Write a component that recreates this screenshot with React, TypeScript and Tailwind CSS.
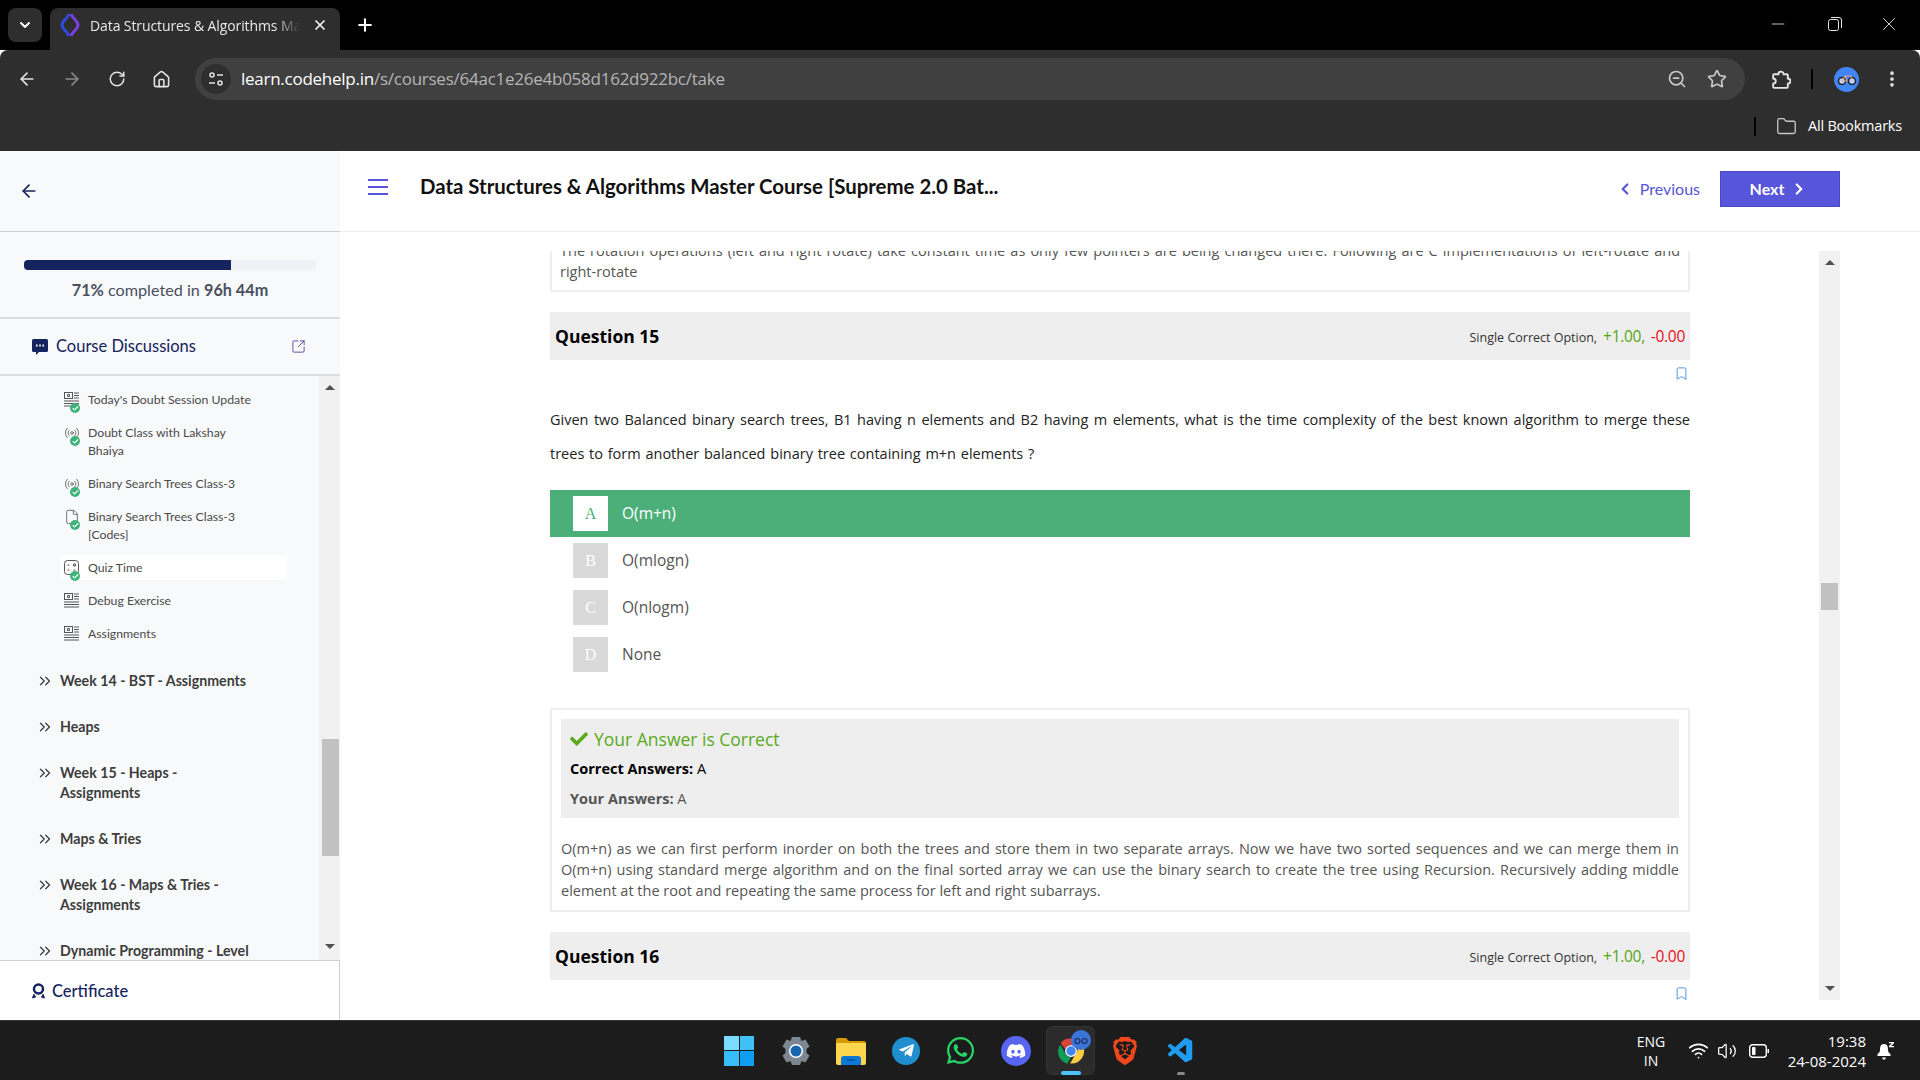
import {
  ArrowLeft,
  ArrowRight,
  Bookmark,
  Check,
  ChevronDown,
  ChevronLeft,
  ChevronRight,
  ChevronsRight,
  EllipsisVertical,
  File,
  Folder,
  House,
  Minus,
  Plus,
  Radio,
  RotateCw,
  SquareArrowOutUpRight,
  Star,
  Volume2,
  Wifi,
  X,
  ZoomOut,
} from 'lucide-react'
import { FaCheck, FaDiscord, FaTelegramPlane, FaWhatsapp } from 'react-icons/fa'
import { SiBrave } from 'react-icons/si'
import { VscVscode } from 'react-icons/vsc'

const site = "font-['Lato',sans-serif]"
const body = "font-['Open_Sans',sans-serif]"

const ArticleIcon = () => (
  <svg width="15" height="15" viewBox="0 0 15 15" fill="none" stroke="#555" strokeWidth="1">
    <rect x="0.5" y="0.5" width="8" height="6" />
    <path d="M3.5 2.5h2v2h-2zM10 1h5M10 3.5h5M10 6h5M0 9h15M0 11.5h15M0 14h15" />
  </svg>
)

const QuizIcon = () => (
  <svg width="15" height="15" viewBox="0 0 15 15" fill="none" stroke="#555" strokeWidth="1">
    <rect x="0.5" y="0.5" width="14" height="14" rx="3" />
    <path d="M3.5 5h2M9.5 4h2v2h-2zM3.5 10h2M9.5 10h2" />
  </svg>
)

const lessons = [
  { title: ["Today's Doubt Session Update"], icon: 'article', done: true },
  { title: ['Doubt Class with Lakshay', 'Bhaiya'], icon: 'radio', done: true },
  { title: ['Binary Search Trees Class-3'], icon: 'radio', done: true },
  { title: ['Binary Search Trees Class-3', '[Codes]'], icon: 'file', done: true },
  { title: ['Quiz Time'], icon: 'quiz', done: true, active: true },
  { title: ['Debug Exercise'], icon: 'article', done: false },
  { title: ['Assignments'], icon: 'article', done: false },
]

const sections = [
  ['Week 14 - BST - Assignments'],
  ['Heaps'],
  ['Week 15 - Heaps -', 'Assignments'],
  ['Maps & Tries'],
  ['Week 16 - Maps & Tries -', 'Assignments'],
  ['Dynamic Programming - Level'],
]

const options = [
  { key: 'A', text: 'O(m+n)', correct: true },
  { key: 'B', text: 'O(mlogn)' },
  { key: 'C', text: 'O(nlogm)' },
  { key: 'D', text: 'None' },
]

const BrowserChrome = () => (
  <div className="shrink-0 text-white">
    <div className="flex h-[50px] bg-black">
      <div className="ml-2 mt-2 flex h-[34px] w-[34px] items-center justify-center rounded-lg bg-[#2e2e2e]">
        <ChevronDown size={16} strokeWidth={3} />
      </div>
      <div className="ml-2 mt-2 flex h-[42px] w-[290px] items-center rounded-t-lg bg-[#2e2e2e] pb-[8px] pl-[10px] pr-3">
        <svg width="20" height="24" viewBox="0 0 20 24" fill="none">
          <path d="M9 1C7 6 2 8 2 12s5 6 7 11" stroke="#2f4bd8" strokeWidth="3" />
          <path d="M11 1c2 5 7 7 7 11s-5 6-7 11" stroke="#7b3fe4" strokeWidth="3" />
        </svg>
        <div className="ml-[10px] w-[210px] overflow-hidden whitespace-nowrap font-['Open_Sans',sans-serif] text-[14px] tracking-[-0.1px] text-[#e8e8e8] [mask-image:linear-gradient(to_right,black_88%,transparent)]">
          Data Structures &amp; Algorithms Master
        </div>
        <X size={16} strokeWidth={2.5} className="ml-3" />
      </div>
      <Plus size={20} strokeWidth={2.5} className="ml-[15px] mt-[15px]" />
      <div className="ml-auto flex items-center pb-[2px] pr-[20px] text-[#e5e5e5]">
        <Minus size={20} strokeWidth={1} />
        <svg width="14" height="14" viewBox="0 0 14 14" fill="none" stroke="currentColor" className="ml-[40px]">
          <rect x="0.5" y="2.5" width="10" height="11" rx="2" />
          <path d="M3 .5h8a2.5 2.5 0 0 1 2.500 2.500v8" />
        </svg>
        <X size={22} strokeWidth={1} className="ml-[36px]" />
      </div>
    </div>
    <div className="h-[101px] rounded-t-lg bg-[#2e2e2e]">
      <div className="flex h-[58px] items-center pl-[17px] pr-[18px]">
        <ArrowLeft size={20} strokeWidth={2} className="text-[#e3e3e3]" />
        <ArrowRight size={20} strokeWidth={2} className="ml-[25px] text-[#8a8a8a]" />
        <RotateCw size={18} strokeWidth={2} className="ml-[26px] text-[#e3e3e3]" />
        <House size={19} strokeWidth={2} className="ml-[26px] text-[#e3e3e3]" />
        <div className="ml-[24px] flex h-[42px] w-[1552px] items-center rounded-full bg-[#404040] pl-[6px] pr-[18px]">
          <div className="flex h-[30px] w-[30px] items-center justify-center rounded-full bg-[#2e2e2e]">
            <svg width="16" height="16" viewBox="0 0 16 16" fill="none" stroke="#e3e3e3" strokeWidth="1.500">
              <circle cx="4" cy="4" r="2" />
              <circle cx="12" cy="12" r="2" />
              <path d="M9 4h6M1 12h6" />
            </svg>
          </div>
          <div className="ml-[10px] whitespace-nowrap font-['Open_Sans',sans-serif] text-[17px] tracking-[-0.25px] text-[#b5b5b5]">
            <span className="text-white">learn.codehelp.in</span>/s/courses/64ac1e26e4b058d162d922bc/take
          </div>
          <ZoomOut size={20} strokeWidth={2} className="ml-auto text-[#c8c8c8]" />
          <Star size={20} strokeWidth={2} className="ml-[20px] text-[#c8c8c8]" />
        </div>
        <svg width="21" height="21" viewBox="0 0 20 20" fill="none" stroke="#e3e3e3" strokeWidth="1.800" className="ml-[25px]">
          <path d="M4 5h4a2.500 2.500 0 0 1 5 0h3a1 1 0 0 1 1 1v3a2.500 2.500 0 0 1 0 5v3a1 1 0 0 1-1 1H4a1 1 0 0 1-1-1v-3a2.500 2.500 0 0 0 0-5V6a1 1 0 0 1 1-1z" />
        </svg>
        <div className="ml-[20px] h-[20px] w-[2px] bg-black" />
        <div className="ml-[21px] flex h-[25px] w-[25px] items-center justify-center rounded-full bg-[#4285f4]">
          <svg width="20" height="12" viewBox="0 0 20 12" fill="none">
            <circle cx="5" cy="8" r="3.500" stroke="#222" strokeWidth="1.500" fill="#bcd4ff" />
            <circle cx="15" cy="8" r="3.500" stroke="#222" strokeWidth="1.500" fill="#bcd4ff" />
            <path d="M5 8 8 3h6l1 5M8 3l2 5h-5" stroke="#f4a58a" strokeWidth="1" />
          </svg>
        </div>
        <EllipsisVertical size={20} strokeWidth={2.5} className="ml-[23px] text-[#e3e3e3]" />
      </div>
      <div className="flex h-[36px] items-center justify-end pr-[18px]">
        <div className="h-[19px] w-[2px] bg-black" />
        <Folder size={21} strokeWidth={1.500} className="ml-[20px] text-[#c8c8c8]" />
        <span className="ml-[11px] font-['Open_Sans',sans-serif] text-[14.500px] tracking-[-0.2px] text-white">All Bookmarks</span>
      </div>
    </div>
  </div>
)

const LessonIcon = ({ icon, done }: { icon: string; done: boolean }) => (
  <div className="relative mt-[1.500px] h-[16.500px] w-[15px] shrink-0 text-[#555]">
    {icon === 'article' && <ArticleIcon />}
    {icon === 'quiz' && <QuizIcon />}
    {icon === 'radio' && <Radio size={16} strokeWidth={1.200} />}
    {icon === 'file' && <File size={16} strokeWidth={1.200} />}
    {done && (
      <span className="absolute left-[6px] top-[11px] flex h-[10px] w-[10px] items-center justify-center rounded-full bg-[#3fb37a] text-white">
        <Check size={7} strokeWidth={4} />
      </span>
    )}
  </div>
)

const Sidebar = () => (
  <aside className={`flex w-[340px] shrink-0 flex-col bg-[#f8f9fb] ${site}`}>
    <div className="flex h-[81px] shrink-0 items-center border-b border-[#cfcfcf] pl-[19px]">
      <ArrowLeft size={20} strokeWidth={2} className="text-[#15235e]" />
    </div>
    <div className="h-[87px] shrink-0 border-b-2 border-[#dcdcdc] px-6 pt-7">
      <div className="h-[10px] overflow-hidden rounded-sm bg-[#f0f1f4]">
        <div className="h-full w-[71%] bg-[#14245f]" />
      </div>
      <div className="mt-[9px] text-center text-[16.200px] leading-[22px] text-[#4a5060]">
        <b>71%</b> completed in <b>96h 44m</b>
      </div>
    </div>
    <div className="flex h-[57px] shrink-0 items-center border-b-2 border-[#dcdcdc] pl-8 pr-[34px] text-[#15235e]">
      <svg width="16" height="16" viewBox="0 0 16 16">
        <path fill="#15235e" d="M1.500 0h13A1.500 1.500 0 0 1 16 1.500v10a1.500 1.500 0 0 1-1.500 1.500H7l-3 3v-3H1.500A1.500 1.500 0 0 1 0 11.500v-10A1.500 1.500 0 0 1 1.500 0z" />
        <path stroke="#fff" strokeWidth="1.800" d="M4 6.500h1.600M7.200 6.500h1.600M10.400 6.500H12" />
      </svg>
      <span className="ml-2 text-[16.500px]">Course Discussions</span>
      <SquareArrowOutUpRight size={15} strokeWidth={1.300} className="ml-auto text-[#4c2a8c]" />
    </div>
    <div className="relative flex h-[584px] shrink-0 overflow-hidden">
      <div className="w-[319px] shrink-0 pt-[11px]">
        <div className="flex flex-col gap-2 pl-[60px] pr-[32px]">
          {lessons.map((l) => (
            <div
              key={l.title.join(' ')}
              className={`flex px-[4px] py-[3.500px] text-[12.250px] leading-[18px] text-[#4a4a4a] ${l.active ? 'bg-white' : ''}`}
            >
              <LessonIcon icon={l.icon} done={l.done} />
              <div className="ml-[9px]">
                {l.title.map((t) => (
                  <div key={t}>{t}</div>
                ))}
              </div>
            </div>
          ))}
        </div>
        <div className="mt-[12px] pl-[36px]">
          {sections.map((s) => (
            <div key={s[0]} className="flex py-[13px] text-[14.200px] font-bold leading-[20px] text-[#3d3d3d]">
              <ChevronsRight size={18} strokeWidth={1.700} className="mt-[1px] shrink-0" />
              <div className="ml-[6px]">
                {s.map((t) => (
                  <div key={t} className="whitespace-nowrap">{t}</div>
                ))}
              </div>
            </div>
          ))}
        </div>
      </div>
      <div className="flex h-[584px] w-[21px] flex-col items-center bg-[#f1f1f1] pt-[9px]">
        <div className="h-0 w-0 border-x-[5px] border-b-[5px] border-x-transparent border-b-[#505050]" />
        <div className="ml-[1px] mt-[349px] h-[117px] w-[17px] bg-[#c1c1c1]" />
        <div className="mt-[88px] h-0 w-0 border-x-[5px] border-t-[5px] border-x-transparent border-t-[#505050]" />
      </div>
    </div>
    <div className="flex h-[61px] shrink-0 items-center border-r border-t border-[#cfcfcf] bg-white pl-8 text-[#15235e]">
      <svg width="13" height="16" viewBox="0 0 13 16" fill="none">
        <circle cx="6.500" cy="6" r="4.500" stroke="#15235e" strokeWidth="2.500" />
        <path d="m2 11-1.500 4L4 13.800M11 11l1.500 4L9 13.800" fill="#15235e" stroke="#15235e" />
      </svg>
      <span className="ml-[7px] text-[16.500px] font-medium">Certificate</span>
    </div>
  </aside>
)

const QuestionBar = ({ n }: { n: number }) => (
  <>
    <div className="mt-5 flex h-[48px] items-center justify-between bg-[#eeeeee] pl-[5px] pr-[5px]">
      <span className={`text-[17.500px] font-bold text-black ${body}`}>Question {n}</span>
      <span className={`flex items-baseline pt-[1px] text-[12.500px] text-[#333] ${body}`}>
        Single Correct Option,
        <span className="ml-[6px] text-[15.500px] tracking-[-0.3px] text-[#55a514]">+1.00,</span>
        <span className="ml-[6px] text-[15.500px] tracking-[-0.3px] text-[#e8101a]">-0.00</span>
      </span>
    </div>
    <div className="flex h-[43px] justify-end pr-[1px] pt-[6px]">
      <Bookmark size={15} strokeWidth={1.500} className="text-[#4a90e2]" />
    </div>
  </>
)

const Quiz = () => (
  <div className={`w-[1140px] shrink-0 overflow-hidden ${body}`}>
    <div className="-mt-[11px] border-x-2 border-b-2 border-[#eeeeee] px-[8px] pb-[8px] text-[14.500px] leading-[21px] text-[#555]">
      <div className="text-justify [text-align-last:justify]">
        The rotation operations (left and right rotate) take constant time as only few pointers are being changed there. Following are C implementations of left-rotate and
      </div>
      <div>right-rotate</div>
    </div>
    <QuestionBar n={15} />
    <div className="text-[14.500px] leading-[33.500px] text-[#222] [word-spacing:1px]">
      <div className="text-justify [text-align-last:justify]">
        Given two Balanced binary search trees, B1 having n elements and B2 having m elements, what is the time complexity of the best known algorithm to merge these
      </div>
      <div>trees to form another balanced binary tree containing m+n elements ?</div>
    </div>
    <div className="mt-5">
      {options.map((o) => (
        <div key={o.key} className={`flex h-[47px] items-center pl-[23px] ${o.correct ? 'bg-[#4caf79]' : ''}`}>
          <div
            className={`flex h-[35px] w-[35px] items-center justify-center font-['Liberation_Serif',serif] text-[16px] ${
              o.correct ? 'bg-white text-[#4caf79]' : 'bg-[#d9d9d9] text-white'
            }`}
          >
            {o.key}
          </div>
          <span className={`ml-[14px] text-[15.500px] ${o.correct ? 'text-white' : 'text-[#555]'}`}>{o.text}</span>
        </div>
      ))}
    </div>
    <div className="mt-[30px] h-[204px] border-2 border-[#eeeeee] px-[9px] pt-[9px]">
      <div className="h-[99px] bg-[#eeeeee] px-[9px] pt-[8px] text-[14.500px]">
        <div className="flex items-center text-[17.500px] leading-[24px] text-[#5aaa1c]">
          <FaCheck size={18} />
          <span className="ml-[6px]">Your Answer is Correct</span>
        </div>
        <div className="mt-[7px] leading-[22px] text-black">
          <b>Correct Answers:</b> A
        </div>
        <div className="mt-2 leading-[22px] text-[#555]">
          <b>Your Answers:</b> A
        </div>
      </div>
      <div className="mt-[20px] text-[14.500px] leading-[21px] text-[#555]">
        <div className="text-justify [text-align-last:justify]">
          O(m+n) as we can first perform inorder on both the trees and store them in two separate arrays. Now we have two sorted sequences and we can merge them in
        </div>
        <div className="text-justify [text-align-last:justify]">
          O(m+n) using standard merge algorithm and on the final sorted array we can use the binary search to create the tree using Recursion. Recursively adding middle
        </div>
        <div>element at the root and repeating the same process for left and right subarrays.</div>
      </div>
    </div>
    <QuestionBar n={16} />
  </div>
)

const Main = () => (
  <main className="flex min-w-0 flex-1 flex-col bg-white">
    <header className={`flex h-[81px] shrink-0 items-center border-b border-[#eeeeee] pb-[4px] pl-[27px] pr-[80px] ${site}`}>
      <svg width="22" height="18" viewBox="0 0 22 18" stroke="#5755d9" strokeWidth="2" className="mb-[4px]">
        <path d="M1 2h20M1 9h20M1 16h20" />
      </svg>
      <h1 className="mb-[5px] ml-[31px] text-[20.400px] font-bold text-[#111]">
        Data Structures &amp; Algorithms Master Course [Supreme 2.0 Bat...
      </h1>
      <div className="ml-auto flex items-center text-[16px] text-[#5755d9]">
        <ChevronLeft size={18} strokeWidth={3} />
        <span className="ml-[6px]">Previous</span>
      </div>
      <div className="ml-[20px] flex h-[36px] w-[120px] items-center justify-center border border-[#4a48c9] bg-[#5755d9] pr-[2px] text-[16px] font-bold text-white">
        Next
        <ChevronRight size={18} strokeWidth={3} className="ml-[6px]" />
      </div>
    </header>
    <div className="flex min-h-0 flex-1 pl-[210px] pr-[80px] pt-[19px]">
      <Quiz />
      <div className="ml-[129px] flex h-[749px] w-[21px] shrink-0 flex-col items-center bg-[#f1f1f1] pt-[9px]">
        <div className="h-0 w-0 border-x-[5px] border-b-[5px] border-x-transparent border-b-[#505050]" />
        <div className="mt-[318px] h-[27px] w-[17px] bg-[#c1c1c1]" />
        <div className="mt-[376px] h-0 w-0 border-x-[5px] border-t-[5px] border-x-transparent border-t-[#505050]" />
      </div>
    </div>
  </main>
)

const Taskbar = () => (
  <footer className="flex h-[60px] shrink-0 items-center border-t border-[#333] bg-[#1c1c1c] text-white">
    <div className="ml-[724px] flex items-center">
      <div className="grid h-[30px] w-[30px] grid-cols-2 gap-[1px]">
        <span className="bg-[#7adcff]" />
        <span className="bg-[#3fc1f7]" />
        <span className="bg-[#38bdf8]" />
        <span className="bg-[#119ef2]" />
      </div>
      <div className="ml-[27px] flex h-[30px] w-[30px] items-center justify-center">
        <svg width="30" height="30" viewBox="0 0 30 30">
          <path fill="#7d8791" d="m11 1h8l1.500 4 4-1.500 4 7-3 2.500v4l3 2.500-4 7-4-1.500L19 29h-8l-1.500-4-4 1.500-4-7 3-2.500v-4l-3-2.500 4-7 4 1.500z" />
          <circle cx="15" cy="15" r="7" fill="#fff" />
          <circle cx="15" cy="15" r="5.500" fill="#1565b0" />
        </svg>
      </div>
      <svg width="30" height="28" viewBox="0 0 30 28" className="ml-[25px]">
        <path fill="#d49a08" d="M0 3a2 2 0 0 1 2-2h8l3 3h15a2 2 0 0 1 2 2v4H0z" />
        <path fill="#ffd64d" d="M0 6h30v20a2 2 0 0 1-2 2H2a2 2 0 0 1-2-2z" />
        <path fill="#0f78d4" d="M5 22a3 3 0 0 1 3-3h14a3 3 0 0 1 3 3v6H5z" />
        <path stroke="#053f7a" strokeWidth="1" d="M11 23h8" />
      </svg>
      <div className="ml-[26px] flex h-[28px] w-[28px] items-center justify-center rounded-full bg-[#1f8fd0] text-white">
        <FaTelegramPlane size={17} />
      </div>
      <FaWhatsapp size={31} className="ml-[25px] text-[#25d366]" />
      <div className="ml-[25px] flex h-[30px] w-[30px] items-center justify-center rounded-full bg-[#5865f2] text-white">
        <FaDiscord size={20} />
      </div>
      <div className="relative ml-[15px] flex h-[49px] w-[49px] items-center justify-center rounded-md border border-[#333] bg-[#2b2b2b]">
        <svg width="30" height="30" viewBox="0 0 48 48">
          <path fill="#db4437" d="M24 4a20 20 0 0 1 17.300 10H24a10 10 0 0 0-9.500 6.800L7.500 11A20 20 0 0 1 24 4z" />
          <path fill="#0f9d58" d="M6.700 14 15 28.500a10 10 0 0 0 9 5.500l-6 10.300A20 20 0 0 1 6.700 14z" />
          <path fill="#ffcd40" d="M42 14a20 20 0 0 1-19.500 30l8.500-14.500a10 10 0 0 0 0-15.500z" />
          <circle cx="24" cy="24" r="8.500" fill="#4285f4" stroke="#fff" strokeWidth="2" />
        </svg>
        <span className="absolute right-[3px] top-[3px] flex h-[20px] w-[20px] items-center justify-center rounded-full bg-[#3b74d9]">
          <svg width="14" height="8" viewBox="0 0 14 8" fill="none" stroke="#1a2b50" strokeWidth="1.200">
            <circle cx="3.500" cy="5" r="2.500" />
            <circle cx="10.500" cy="5" r="2.500" />
          </svg>
        </span>
        <span className="absolute -bottom-[1px] left-[14px] h-[4px] w-[20px] rounded bg-[#4cc2ff]" />
      </div>
      <SiBrave size={28} className="ml-[16px] text-[#f1471d]" />
      <div className="relative ml-[27px]">
        <VscVscode size={30} className="text-[#1f9cf0]" />
        <span className="absolute -bottom-[9px] left-[11px] h-[3px] w-[8px] rounded bg-[#8a8a8a]" />
      </div>
    </div>
    <div className="ml-[435px] w-[40px] text-center font-['Open_Sans',sans-serif] text-[14px] leading-[19px]">
      ENG
      <br />
      IN
    </div>
    <Wifi size={21} strokeWidth={2} className="ml-[17px]" />
    <Volume2 size={20} strokeWidth={1.500} className="ml-[8px]" />
    <svg width="20" height="14" viewBox="0 0 20 14" fill="none" className="ml-[12px]">
      <rect x="0.700" y="0.700" width="16.600" height="12.600" rx="3" stroke="#fff" strokeWidth="1.400" />
      <rect x="3" y="3" width="3.500" height="8" rx="1" fill="#fff" />
      <rect x="18.500" y="5" width="1.500" height="4" fill="#fff" />
    </svg>
    <div className="ml-[10px] w-[87px] text-right font-['Open_Sans',sans-serif] text-[15px] leading-[20px]">
      19:38
      <br />
      24-08-2024
    </div>
    <svg width="18" height="20" viewBox="0 0 18 20" className="ml-[11px]" fill="#fff">
      <path d="M7 3C3.500 3 3 6 3 9c0 2-1 3-2.500 4v2h13v-2C12 12 11 11 11 9c0-3-.5-6-4-6zM5 16.500h4l-1 2H6z" />
      <path d="M12 1h5v1.200L14.200 5H17v1.200h-5V5l2.800-2.800H12z" />
    </svg>
  </footer>
)

export default function App() {
  return (
    <div className="flex h-[1080px] w-[1920px] flex-col overflow-hidden bg-white">
      <BrowserChrome />
      <div className="flex h-[869px] shrink-0">
        <Sidebar />
        <Main />
      </div>
      <Taskbar />
    </div>
  )
}
